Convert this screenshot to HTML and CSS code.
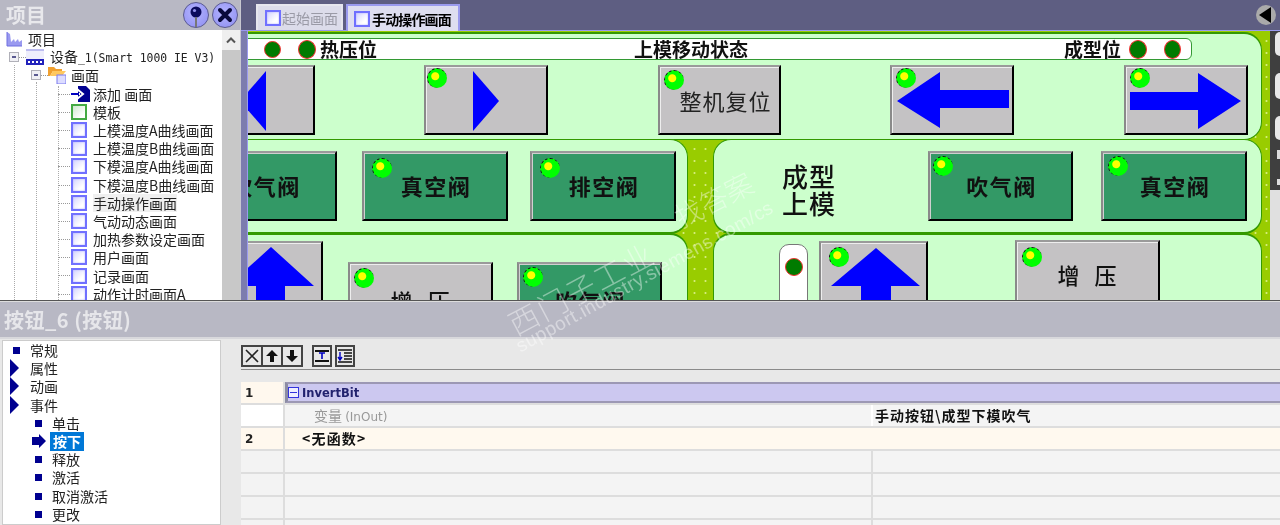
FILE: index.html
```html
<!DOCTYPE html>
<html lang="zh">
<head>
<meta charset="utf-8">
<title>项目</title>
<link rel="stylesheet" href="styles.css">
</head>
<body>
<div class="app">
  <section class="top">
    <aside class="project">
      <header class="project-head">
        <h1>项目</h1>
        <span class="round-btn">
          <svg viewBox="0 0 26 26" width="26" height="26"><circle cx="13" cy="10" r="5.5" fill="#0b0b5c"/><circle cx="11.5" cy="8.5" r="1.6" fill="#8f8fe8"/><path d="M13 15v10" stroke="#777" stroke-width="2"/></svg>
        </span>
        <span class="round-btn">
          <svg viewBox="0 0 26 26" width="26" height="26"><path d="M8 8l10 10M18 8L8 18" stroke="#0a0a3c" stroke-width="4" stroke-linecap="round"/></svg>
        </span>
      </header>
      <div class="tree-wrap">
        <div class="tree">
          <i class="guide g1"></i><i class="guide g2"></i><i class="guide g3"></i>
          <div class="row r0">
            <svg class="r-ico" viewBox="0 0 17 16" width="17" height="16"><path d="M1 1v14h15V9l-3 2-1-3-3 3-1-3-3 3-1-8z" fill="#9a9af0"/><path d="M1 1v14h15" fill="none" stroke="#6f6fe0"/></svg>
            <span>项目</span>
          </div>
          <div class="row r1">
            <b class="exp"></b>
            <svg class="r-ico" viewBox="0 0 18 17" width="18" height="17"><path d="M0 1h18" stroke="#7a7ae0"/><rect y="2" width="18" height="8" fill="#eeeefc"/><rect y="10" width="18" height="6" fill="#2222bb"/><path d="M2 13h2M6 13h2M10 13h2M14 13h2" stroke="#fff" stroke-width="2"/></svg>
            <span>设备<span class="mono">_1(Smart 1000 IE V3)</span></span>
          </div>
          <div class="row r2">
            <b class="exp"></b>
            <svg class="r-ico" viewBox="0 0 18 18" width="18" height="18"><path d="M0 10V1h6l2 2h6v2H5l-3 5z" fill="#f0a030"/><path d="M2 10l3-5h13l-4 5z" fill="#ffc860"/><rect x="9" y="9" width="9" height="9" fill="#dcdcff" stroke="#7a7aee"/></svg>
            <span>画面</span>
          </div>
          <div class="row item">
            <svg class="r-ico" viewBox="0 0 20 16" width="20" height="16"><path d="M7 0h8l4 4v12H7z" fill="#000090"/><path d="M0 8h9M6 3l6 5-6 5" fill="none" stroke="#fff" stroke-width="2"/><path d="M0 8h8" stroke="#0000c0" stroke-width="2"/></svg>
            <span class="add-label">添加 画面</span>
          </div>
          <div class="row item"><i class="ico tpl"></i><span>模板</span></div>
          <div class="row item"><i class="ico"></i><span>上模温度A曲线画面</span></div>
          <div class="row item"><i class="ico"></i><span>上模温度B曲线画面</span></div>
          <div class="row item"><i class="ico"></i><span>下模温度A曲线画面</span></div>
          <div class="row item"><i class="ico"></i><span>下模温度B曲线画面</span></div>
          <div class="row item"><i class="ico"></i><span class="soft">手动操作画面</span></div>
          <div class="row item"><i class="ico"></i><span>气动动态画面</span></div>
          <div class="row item"><i class="ico"></i><span>加热参数设定画面</span></div>
          <div class="row item"><i class="ico"></i><span>用户画面</span></div>
          <div class="row item"><i class="ico"></i><span>记录画面</span></div>
          <div class="row item"><i class="ico"></i><span>动作计时画面A</span></div>
        </div>
        <div class="scroll">
          <span class="scroll-up"><svg viewBox="0 0 12 8" width="12" height="8"><path d="M2 6.5l4-4 4 4" fill="none" stroke="#555" stroke-width="2"/></svg></span>
        </div>
      </div>
    </aside>

    <main class="main">
      <nav class="tabs">
        <div class="tab"><i class="ico"></i><span>起始画面</span></div>
        <div class="tab active"><i class="ico"></i><span>手动操作画面</span></div>
        <span class="back"><svg viewBox="0 0 20 20" width="20" height="20"><path d="M3 10l12-8v16z" fill="#000"/></svg></span>
      </nav>
      <div class="stage">
        <div class="strip"></div>
        <div class="canvas">
          <div class="panel p-top"></div>
          <div class="panel p-ml"></div>
          <div class="panel p-mr"></div>
          <div class="panel p-bl"></div>
          <div class="panel p-br"></div>

          <div class="status">
            <i class="lamp l1"></i><i class="lamp l2"></i>
            <span class="st st1">热压位</span>
            <span class="st st2">上模移动状态</span>
            <span class="st st3">成型位</span>
            <i class="lamp l3"></i><i class="lamp l4"></i>
          </div>

          <div class="btn b1"><svg class="art" viewBox="0 0 124 70"><path d="M75 6v60L49 36z" fill="#0000ff"/></svg></div>
          <div class="btn b2"><i class="led"></i><svg class="art" viewBox="0 0 124 70"><path d="M49 6v60l26-30z" fill="#0000ff"/></svg></div>
          <div class="btn b3"><i class="led"></i><span class="lbl thin">整机复位</span></div>
          <div class="btn b4"><i class="led"></i><svg class="art" viewBox="0 0 124 70"><path d="M7 36l43-29v18h69v18H50v20z" fill="#0000ff"/></svg></div>
          <div class="btn b5"><i class="led"></i><svg class="art" viewBox="0 0 124 70"><path d="M6 27h68V8l43 28-43 28V45H6z" fill="#0000ff"/></svg></div>

          <div class="btn green b6"><span class="lbl">吹气阀</span></div>
          <div class="btn green b7"><i class="led"></i><span class="lbl">真空阀</span></div>
          <div class="btn green b8"><i class="led"></i><span class="lbl">排空阀</span></div>
          <div class="title-cell">成型<br>上模</div>
          <div class="btn green b9"><i class="led"></i><span class="lbl">吹气阀</span></div>
          <div class="btn green b10"><i class="led"></i><span class="lbl">真空阀</span></div>

          <div class="btn b11"><svg class="art" viewBox="0 0 109 70"><path d="M57 6l43 39H71v25H42V45H14z" fill="#0000ff"/></svg></div>
          <div class="btn b12"><i class="led"></i><span class="lbl">增 压</span></div>
          <div class="btn green b13"><i class="led"></i><span class="lbl">吹气阀</span></div>
          <div class="pill"><i class="lamp l5"></i></div>
          <div class="btn b14"><i class="led"></i><svg class="art" viewBox="0 0 109 70"><path d="M57 7l44 38H72v25H42V45H12z" fill="#0000ff"/></svg></div>
          <div class="btn b15"><i class="led"></i><span class="lbl">增 压</span></div>
        </div>
        <div class="edge">
          <div class="edge-dark">
            <i class="blob"></i><i class="blob"></i><i class="blob"></i>
            <i class="pip"></i><i class="pip"></i>
          </div>
        </div>
      </div>
    </main>
  </section>

  <section class="bottom">
    <header class="prop-head">按钮_6 (按钮)</header>
    <div class="prop-body">
      <ul class="cats">
        <li class="cat"><i class="sq"></i>常规</li>
        <li class="cat"><i class="tri"></i>属性</li>
        <li class="cat"><i class="tri"></i>动画</li>
        <li class="cat"><i class="tri"></i>事件</li>
        <li class="sub"><i class="sq"></i>单击</li>
        <li class="sub">
          <svg class="cur" viewBox="0 0 14 14" width="14" height="14"><path d="M0 3h7V0l7 7-7 7v-3H0z" fill="#000090"/></svg>
          <span class="sel">按下</span>
        </li>
        <li class="sub"><i class="sq"></i>释放</li>
        <li class="sub"><i class="sq"></i>激活</li>
        <li class="sub"><i class="sq"></i>取消激活</li>
        <li class="sub"><i class="sq"></i>更改</li>
      </ul>
      <div class="fn">
        <div class="tools">
          <div class="tool-group">
            <span class="tool"><svg viewBox="0 0 20 20" width="20" height="20"><path d="M4 4l12 12M16 4L4 16" stroke="#222" stroke-width="1.6"/></svg></span>
            <span class="tool"><svg viewBox="0 0 20 20" width="20" height="20"><path d="M10 4l6 6h-4v6H8v-6H4z" fill="#111"/></svg></span>
            <span class="tool"><svg viewBox="0 0 20 20" width="20" height="20"><path d="M10 16l6-6h-4V4H8v6H4z" fill="#111"/></svg></span>
          </div>
          <div class="tool-group">
            <span class="tool"><svg viewBox="0 0 20 20" width="20" height="20"><path d="M3 5h14M3 15h14" stroke="#111" stroke-width="2"/><path d="M10 7v6M7 7h6" stroke="#0000c0" stroke-width="1.6"/></svg></span>
          </div>
          <div class="tool-group">
            <span class="tool"><svg viewBox="0 0 20 20" width="20" height="20"><path d="M3 4h14M9 7h8M9 10h8M9 13h8M3 16h14" stroke="#111" stroke-width="1.4"/><path d="M5 6v7M3 11l2 3 2-3" stroke="#0000c0" fill="none" stroke-width="1.4"/></svg></span>
          </div>
        </div>
        <div class="grid">
          <div class="g-row head"><div class="g-num">1</div><div class="g-name"><b class="minus"></b>InvertBit</div></div>
          <div class="g-row param"><div class="g-num blank"></div><div class="g-a"><span class="pname">变量 <small>(InOut)</small></span></div><div class="g-b">手动按钮\成型下模吹气</div></div>
          <div class="g-row none"><div class="g-num">2</div><div class="g-a">&lt;无函数&gt;</div></div>
          <div class="g-row empty"><div class="g-num"></div><div class="g-a"></div><div class="g-b"></div></div>
          <div class="g-row empty"><div class="g-num"></div><div class="g-a"></div><div class="g-b"></div></div>
          <div class="g-row empty"><div class="g-num"></div><div class="g-a"></div><div class="g-b"></div></div>
          <div class="g-row empty"><div class="g-num"></div><div class="g-a"></div><div class="g-b"></div></div>
        </div>
      </div>
    </div>
  </section>

  <div class="mark m1">西门子工业</div>
  <div class="mark m2">找答案</div>
  <div class="mark m3">support.industry.siemens.com/cs</div>
</div>
</body>
</html>
```

FILE: styles.css
```css
* { box-sizing: border-box; }
html, body { margin: 0; padding: 0; }
body { width: 1280px; height: 525px; overflow: hidden; background: #e8e8e8; }
.app {
  position: relative; width: 1280px; height: 525px; overflow: hidden;
  font-family: "Noto Sans CJK SC", "Liberation Sans", sans-serif;
  font-size: 14px; color: #222; filter: blur(.35px);
}
i, b { display: block; font-style: normal; }

/* ---------- top ---------- */
.top { display: flex; height: 300px; background: #b8b8c4; }
.project { width: 241px; flex: none; display: flex; flex-direction: column; border-right: 1px solid #c8c8d0; }
.project-head { height: 30px; flex: none; display: flex; align-items: center; gap: 3px; background: #b8b8c4; padding: 0 2px 0 6px; }
.project-head h1 { margin: 0 auto 0 0; font-size: 20px; line-height: 30px; font-weight: 700; color: #e8e8ec; }
.round-btn { width: 26px; height: 26px; border-radius: 50%; background: radial-gradient(circle at 45% 40%, #b4b4ff, #8c8cf0); border: 1px solid #5a5a90; display: flex; overflow: hidden; }
.round-btn svg { margin: -1px; }
.tree-wrap { flex: 1; display: flex; min-height: 0; background: #fff; }
.tree { position: relative; flex: 1; overflow: hidden; font-size: 14px; }
.row { position: relative; height: 18.2px; display: flex; align-items: center; white-space: nowrap; line-height: 18px; }
.r0 { padding-left: 6px; gap: 5px; }
.r1 { padding-left: 26px; gap: 6px; }
.r2 { padding-left: 48px; gap: 5px; }
.exp { position: absolute; width: 10px; height: 10px; border: 1px solid #b0b0b8; background: #f0f0f4; top: 4px; z-index: 1; }
.exp::after { content: ""; position: absolute; left: 2px; right: 2px; top: 3px; height: 2px; background: #5a5a90; }
.r1 .exp { left: 9px; }
.r2 .exp { left: 31px; }
.r1::before, .r2::before, .item::before { content: ""; position: absolute; border-top: 1px dotted #999; top: 9px; }
.r1::before { left: 14px; width: 12px; }
.r2::before { left: 36px; width: 12px; }
.item::before { left: 58px; width: 12px; }
.guide { position: absolute; bottom: 0; border-left: 1px dotted #aaa; }
.g1 { left: 14px; top: 35px; }
.g2 { left: 36px; top: 52px; }
.g3 { left: 58px; top: 56px; }
.r-ico { flex: none; }
.item { padding-left: 71px; gap: 6px; }
.item .add-label { margin-left: -4px; }
.mono { font-family: "DejaVu Sans Mono", monospace; font-size: 11.4px; }
.soft { background: #f0f0f0; }
.ico { width: 16px; height: 16px; flex: none; border: 2px solid #7070ff; background: linear-gradient(135deg, #d4d4ff, #fff 70%); box-shadow: inset 0 0 2px #a8a8ff; }
.ico.tpl { border-color: #44aa44; background: linear-gradient(135deg, #d0e8d0, #fff 80%); box-shadow: none; }
.scroll { width: 18px; flex: none; background: #c8c8c8; }
.scroll-up { display: flex; align-items: center; justify-content: center; height: 20px; background: #efefef; }

.main { flex: 1; min-width: 0; display: flex; flex-direction: column; background: #5e5e82; }
.tabs { height: 31px; flex: none; display: flex; align-items: flex-end; padding-left: 15px; gap: 3px; background: #5e5e82; border-bottom: 1px solid #9a9aee; }
.tab { height: 26px; padding: 0 3px 0 7px; display: flex; align-items: center; gap: 1px; background: #dcdcea; border: 2px solid #e6e6ee; border-bottom: 0; color: #9a9aa6; font-size: 14px; }
.tab.active { height: 27px; border-color: #9a9aee; background: #dedef0; padding: 0 7px 0 6px; margin-bottom: -1px; gap: 2px; color: #000; font-weight: 700; letter-spacing: -.85px; }
.back { margin: 0 4px 5px auto; width: 20px; height: 20px; border-radius: 50%; background: #aaa; display: flex; }
.stage { flex: 1; min-height: 0; display: flex; }
.strip { width: 7px; flex: none; background: #7c7cae; border-right: 1px solid #9a9aee; }
.canvas {
  position: relative; flex: none; width: 1022px; overflow: hidden; background-color: #99cc00;
  background-image: radial-gradient(circle, #d4ec78 0 .8px, #99cc00 1.3px);
  background-size: 11px 12px; background-position: 1px 4px;
}
.edge { flex: 1; background: #e0e0e0; }
.edge-dark { height: 159px; background: #3f3f3f; display: flex; flex-direction: column; align-items: flex-end; padding-top: 1px; }
.blob { width: 5px; height: 24px; background: #e8e8e8; border-radius: 5px 0 0 5px; }
.blob:nth-child(2) { margin-top: 17px; height: 26px; }
.blob:nth-child(3) { margin-top: 17px; }
.pip { width: 3px; height: 9px; background: #ddd; margin-top: 10px; }
.pip:last-child { height: 6px; margin-top: 20px; }

.panel { position: absolute; background: #ccffcc; border: 2px solid #339900; }
.p-top { left: -10px; width: 1024px; top: 1px; height: 108px; border-radius: 0 18px 18px 0; border-width: 2px 1px 1px 0; }
.p-ml { left: -10px; width: 450px; top: 108px; height: 95px; border-radius: 0 18px 18px 0; border-width: 1px 1px 2px 0; }
.p-mr { left: 465px; width: 549px; top: 108px; height: 95px; border-radius: 18px; border-width: 1px; border-bottom-width: 2px; }
.p-bl { left: -10px; width: 450px; top: 202px; height: 90px; border-radius: 0 18px 0 0; border-width: 2px 1px 0 0; }
.p-br { left: 465px; width: 549px; top: 202px; height: 90px; border-radius: 18px 18px 0 0; border-width: 2px 1px 0 1px; }

.status { position: absolute; left: -10px; top: 7px; width: 954px; height: 22px; background: #fff; border: 1px solid #339933; border-radius: 0 6px 6px 0; }
.st { position: absolute; top: -2px; line-height: 24px; font-size: 19px; font-weight: 700; color: #111; white-space: nowrap; }
.st1 { left: 81px; }
.st2 { left: 395px; }
.st3 { left: 825px; }
.lamp { position: absolute; border-radius: 50%; background: #007b00; border: 1px solid #f03030; }
.l1 { left: 25px; top: 2px; width: 17px; height: 17px; }
.l2 { left: 59px; top: 1px; width: 18px; height: 19px; }
.l3 { left: 890px; top: 1px; width: 18px; height: 19px; }
.l4 { left: 925px; top: 1px; width: 17px; height: 19px; }
.l5 { left: 5px; top: 13px; width: 18px; height: 18px; }

.btn {
  position: absolute; width: 124px; height: 70px; background: #c4c2c4;
  border: 2px solid; border-color: #9a9a9a #000 #000 #8a8a8a;
  box-shadow: inset 1px 1px 0 #eee;
  display: flex; align-items: center; justify-content: center;
}
.btn.green { background: #339966; box-shadow: inset 1px 1px 0 #d0d0d0; }
.art { position: absolute; left: -2px; top: -2px; width: calc(100% + 4px); height: calc(100% + 4px); overflow: visible; }
.led {
  position: absolute; left: 4px; top: 1px; width: 20px; height: 20px; border-radius: 50%;
  background: radial-gradient(circle at 38% 38%, #ffff00 0 3.5px, #00ff00 4.5px);
  border-left: 1px dashed #111; border-top: 1px dashed #111; z-index: 1;
}
.lbl { font-size: 22px; font-weight: 700; letter-spacing: 1.5px; color: #111; line-height: 26px; padding-left: 2px; margin-top: -2px; white-space: nowrap; }
.lbl.thin { font-weight: 400; letter-spacing: 1px; padding-left: 12px; margin-top: 0; color: #222; }

.b1 { left: -57px; top: 34px; }
.b2 { left: 176px; top: 34px; }
.b3 { left: 410px; top: 34px; width: 123px; }
.b4 { left: 642px; top: 34px; }
.b5 { left: 876px; top: 34px; }
.b6 { left: -56px; top: 120px; width: 145px; }
.b7 { left: 114px; top: 120px; width: 146px; }
.b8 { left: 282px; top: 120px; width: 146px; }
.b9 { left: 680px; top: 120px; width: 145px; }
.b10 { left: 853px; top: 120px; width: 146px; }
.b11 { left: -34px; top: 210px; width: 109px; }
.b12 { left: 100px; top: 231px; width: 145px; }
.b13 { left: 269px; top: 231px; width: 145px; }
.b14 { left: 571px; top: 210px; width: 109px; }
.b15 { left: 767px; top: 209px; width: 145px; }
.b2 .led { left: 1px; }
.b3 .led { top: 3px; }
.b7 .led, .b8 .led { left: 8px; top: 5px; }
.b9 .led { left: 3px; top: 3px; }
.b10 .led { left: 5px; top: 3px; }
.b12 .led { top: 4px; }
.b13 .led { top: 3px; }
.b14 .led { left: 8px; top: 4px; }
.b15 .led { left: 5px; top: 5px; }
.b12 .lbl, .b13 .lbl { margin-top: 6px; }
.b12 .lbl, .b15 .lbl { letter-spacing: 5px; padding-left: 4px; font-weight: 500; }
.title-cell { position: absolute; left: 534px; top: 131px; font-size: 26px; line-height: 27px; font-weight: 500; color: #111; letter-spacing: 1px; }
.pill { position: absolute; left: 531px; top: 213px; width: 29px; height: 70px; background: #fff; border: 1px solid #777; border-radius: 10px 10px 0 0; }

/* ---------- bottom ---------- */
.bottom { height: 225px; display: flex; flex-direction: column; }
.prop-head { height: 39px; flex: none; background: #b8b8c4; border-top: 1px solid #555; border-bottom: 2px solid #d8d8dc; box-shadow: inset 0 1px 0 #ddd; padding-left: 4px; color: #e6e6ea; font-size: 20px; line-height: 38px; font-weight: 700; letter-spacing: .5px; white-space: nowrap; }
.prop-body { flex: 1; min-height: 0; display: flex; background: #e8e8e8; }
.cats { list-style: none; margin: 1px 0 0 2px; padding: 0; width: 219px; flex: none; background: #fff; border: 1px solid #ccc; font-size: 14px; }
.cat, .sub { position: relative; height: 18.2px; line-height: 18px; white-space: nowrap; }
.cat { padding-left: 27px; }
.sub { padding-left: 49px; }
.sq { position: absolute; top: 6px; left: 10px; width: 7px; height: 7px; background: #000090; }
.sub .sq { left: 32px; }
.tri { position: absolute; left: 7px; top: 0; width: 0; height: 0; border-left: 9px solid #000090; border-top: 9px solid transparent; border-bottom: 9px solid transparent; }
.cur { position: absolute; left: 29px; top: 2px; }
.sel { display: inline-block; margin-left: -2px; padding: 0 3px; background: #0078d7; color: #fff; font-weight: 700; line-height: 19px; height: 19px; }

.fn { flex: 1; min-width: 0; padding: 6px 0 0 20px; }
.tools { display: flex; gap: 3px; height: 25px; border-bottom: 1px solid #8a8a8a; padding-bottom: 2px; }
.tool-group { display: flex; height: 22px; }
.tool { width: 20px; height: 22px; border: 2px solid #444; display: flex; align-items: center; justify-content: center; background: #e8e8e8; }
.tool-group:first-child .tool { width: 22px; margin-left: -2px; }
.tool-group:first-child .tool:first-child { margin-left: 0; }
.tool-group:nth-child(2) { margin-left: 6px; }
.tool svg { flex: none; }
.grid { margin-top: 12px; }
.g-row { display: flex; height: 23px; border-bottom: 2px solid #ddd; }
.g-num { width: 44px; flex: none; background: #fff8ee; font-weight: 700; font-size: 12px; font-family: "DejaVu Sans", sans-serif; line-height: 22px; padding-left: 4px; border-right: 2px solid #ddd; }
.g-num.blank { background: #fff; }
.g-name { flex: 1; background: #ccc8f0; border-left: 3px solid #8c8ca4; border-top: 2px solid #9c98b4; border-bottom: 2px solid #9c98b4; color: #22226e; font: 700 11.5px/18px "DejaVu Sans", sans-serif; display: flex; align-items: center; gap: 3px; }
.minus { position: relative; width: 11px; height: 11px; border: 1px solid #3333dd; background: #eeeeff; }
.minus::after { content: ""; position: absolute; left: 1px; right: 1px; top: 4px; height: 1px; background: #3333dd; }
.g-a { width: 586px; flex: none; background: #f4f4f4; }
.g-b { flex: 1; background: #f4f4f4; border-left: 2px solid #ddd; }
.param .g-a { padding-left: 29px; color: #999; line-height: 21px; }
.param small { font: 12px "DejaVu Sans", sans-serif; }
.param .g-b { border-left-color: #fff; padding-left: 2px; font-weight: 700; line-height: 21px; color: #111; letter-spacing: 1px; }
.none { background: #fff9ef; }
.none .g-a { flex: 1; background: #fff9ef; padding-left: 17px; font-weight: 700; line-height: 21px; color: #111; letter-spacing: 1.2px; }
.empty .g-num { background: #f3f3f3; }

/* ---------- watermark ---------- */
.mark { position: absolute; color: rgba(255,255,255,.42); white-space: nowrap; transform-origin: 0 100%; font-weight: 300; }
.m1 { left: 518px; top: 306px; font-size: 30px; line-height: 34px; letter-spacing: 2px; transform: rotate(-28deg); }
.m2 { left: 683px; top: 200px; font-size: 28px; line-height: 32px; transform: rotate(-27deg); }
.m3 { left: 523px; top: 335px; font: 19px/22px "Liberation Sans", sans-serif; letter-spacing: .5px; transform: rotate(-29deg); }
```
